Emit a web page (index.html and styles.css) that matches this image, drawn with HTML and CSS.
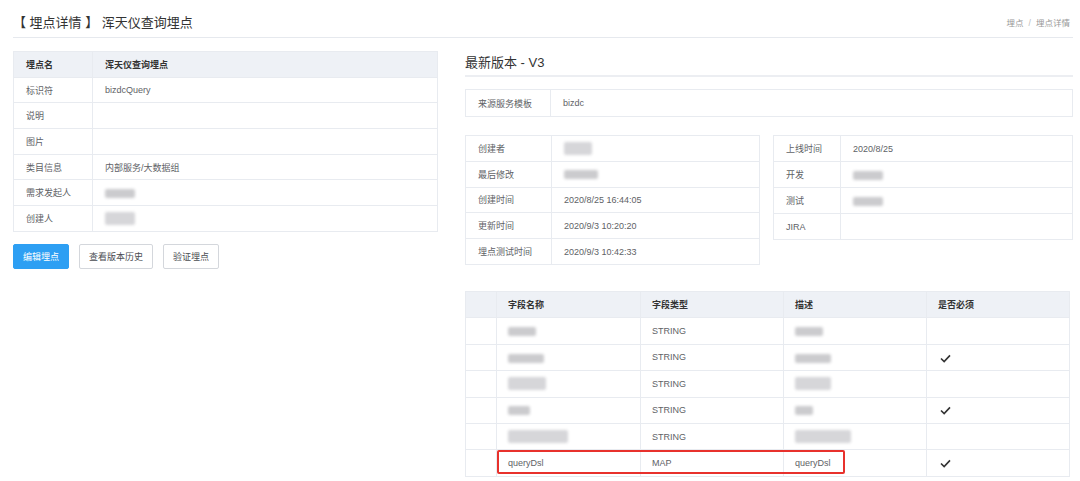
FILE: index.html
```
<!DOCTYPE html>
<html lang="zh">
<head>
    <meta charset="UTF-8">
    <title>埋点详情</title>
    <link rel="stylesheet" href="styles.css">
</head>
<body>
    <div class="page">
        <div class="page_head">
            <h1 class="page_title">【 埋点详情 】 浑天仪查询埋点</h1>
            <div class="crumb"><span>埋点</span><span class="sep">/</span><span>埋点详情</span></div>
        </div>
        <div class="page_body">
            <!-- 左侧: 埋点基本信息 -->
            <div class="left_col">
                <table class="info_table">
                    <tr class="head_row"><td class="lbl">埋点名</td><td>浑天仪查询埋点</td></tr>
                    <tr><td class="lbl">标识符</td><td>bizdcQuery</td></tr>
                    <tr><td class="lbl">说明</td><td></td></tr>
                    <tr><td class="lbl">图片</td><td></td></tr>
                    <tr><td class="lbl">类目信息</td><td>内部服务/大数据组</td></tr>
                    <tr><td class="lbl">需求发起人</td><td><span class="blur" style="width:30px"></span></td></tr>
                    <tr><td class="lbl">创建人</td><td><span class="blur tall" style="width:30px"></span></td></tr>
                </table>
                <div class="btns">
                    <button class="btn primary">编辑埋点</button>
                    <button class="btn">查看版本历史</button>
                    <button class="btn">验证埋点</button>
                </div>
            </div>
            <!-- 右侧: 版本信息 -->
            <div class="right_col">
                <h2 class="ver_title">最新版本 - V3</h2>
                <table class="info_table src_table">
                    <tr><td class="lbl">来源服务模板</td><td>bizdc</td></tr>
                </table>
                <div class="meta_wrap">
                    <table class="info_table meta_left">
                        <tr><td class="lbl">创建者</td><td><span class="blur tall" style="width:28px"></span></td></tr>
                        <tr><td class="lbl">最后修改</td><td><span class="blur" style="width:34px"></span></td></tr>
                        <tr><td class="lbl">创建时间</td><td>2020/8/25 16:44:05</td></tr>
                        <tr><td class="lbl">更新时间</td><td>2020/9/3 10:20:20</td></tr>
                        <tr><td class="lbl">埋点测试时间</td><td>2020/9/3 10:42:33</td></tr>
                    </table>
                    <table class="info_table meta_right">
                        <tr><td class="lbl">上线时间</td><td>2020/8/25</td></tr>
                        <tr><td class="lbl">开发</td><td><span class="blur" style="width:30px"></span></td></tr>
                        <tr><td class="lbl">测试</td><td><span class="blur" style="width:30px"></span></td></tr>
                        <tr><td class="lbl">JIRA</td><td></td></tr>
                    </table>
                </div>
                <div class="field_wrap">
                    <table class="field_table">
                        <tr class="head_row"><td class="c0"></td><td>字段名称</td><td>字段类型</td><td>描述</td><td>是否必须</td></tr>
                        <tr><td></td><td><span class="blur" style="width:28px"></span></td><td>STRING</td><td><span class="blur" style="width:28px"></span></td><td></td></tr>
                        <tr><td></td><td><span class="blur" style="width:36px"></span></td><td>STRING</td><td><span class="blur" style="width:36px"></span></td><td><svg class="chk" viewBox="0 0 12 10"><polyline points="1,5 4.5,8.5 11,1.5"/></svg></td></tr>
                        <tr><td></td><td><span class="blur tall" style="width:38px"></span></td><td>STRING</td><td><span class="blur tall" style="width:36px"></span></td><td></td></tr>
                        <tr><td></td><td><span class="blur" style="width:22px"></span></td><td>STRING</td><td><span class="blur" style="width:18px"></span></td><td><svg class="chk" viewBox="0 0 12 10"><polyline points="1,5 4.5,8.5 11,1.5"/></svg></td></tr>
                        <tr><td></td><td><span class="blur tall" style="width:60px"></span></td><td>STRING</td><td><span class="blur tall" style="width:56px"></span></td><td></td></tr>
                        <tr><td></td><td>queryDsl</td><td>MAP</td><td>queryDsl</td><td><svg class="chk" viewBox="0 0 12 10"><polyline points="1,5 4.5,8.5 11,1.5"/></svg></td></tr>
                    </table>
                    <div class="mark_box"></div>
                </div>
            </div>
        </div>
    </div>
</body>
</html>
```
FILE: styles.css
```
*{
    margin: 0;
    padding: 0;
    box-sizing: border-box;
}
body{
    background: #fff;
    font-family: "Liberation Sans", "Noto Sans CJK SC", sans-serif;
    color: #606266;
    font-size: 9px;
}
.page{
    padding: 0 7px 0 13px;
}
.page_head{
    display: flex;
    justify-content: space-between;
    align-items: flex-end;
    height: 38px;
    border-bottom: 1px solid #e6e9ee;
    padding-bottom: 6px;
}
.page_title{
    font-size: 13px;
    font-weight: normal;
    color: #333;
    line-height: 16px;
}
.crumb{
    font-size: 8.5px;
    color: #999;
    padding-right: 3px;
    line-height: 16px;
}
.crumb .sep{
    margin: 0 5px;
    color: #bbb;
}
.page_body{
    display: flex;
    gap: 27px;
    padding-top: 13px;
}
.left_col{
    width: 425px;
}
.right_col{
    flex: 1;
}
.info_table, .field_table{
    width: 100%;
    border-collapse: collapse;
    table-layout: fixed;
}
.info_table td, .field_table td{
    border: 1px solid #e8ebf0;
    height: 25.7px;
    padding: 0 12px;
    vertical-align: middle;
    white-space: nowrap;
}
.info_table td.lbl{
    width: 79px;
}
.head_row td{
    background: #eef1f6;
    color: #333;
    font-weight: bold;
}
.btns{
    display: flex;
    gap: 10px;
    margin-top: 12px;
}
.btn{
    height: 25px;
    padding: 0 9px;
    font-family: inherit;
    font-size: 9px;
    color: #4a4d52;
    background: #fff;
    border: 1px solid #d4d7dc;
    border-radius: 2px;
}
.btn.primary{
    background: #2d9ff3;
    border-color: #2d9ff3;
    color: #fff;
}
.ver_title{
    font-size: 13px;
    font-weight: normal;
    color: #333;
    line-height: 24px;
    border-bottom: 2px solid #eceef2;
}
.src_table{
    margin-top: 12px;
}
.src_table td{
    height: 27px;
}
.src_table td.lbl{
    width: 85px;
}
.meta_wrap{
    display: flex;
    align-items: flex-start;
    gap: 13px;
    margin-top: 18px;
}
.meta_left{
    width: 295px;
}
.meta_left td.lbl{
    width: 86px;
}
.meta_left td{
    height: 25.8px;
}
.meta_right{
    width: 300px;
}
.meta_right td{
    height: 26px;
}
.meta_right td.lbl{
    width: 67px;
}
.field_wrap{
    position: relative;
    width: 605px;
    margin-top: 26px;
}
.field_table td{
    height: 26.4px;
    padding: 0 11px;
}
.field_table td.c0{
    width: 31px;
}
.field_table td:nth-child(2){ width: 144px; }
.field_table td:nth-child(3){ width: 143px; }
.field_table td:nth-child(4){ width: 143px; }
.blur{
    display: inline-block;
    height: 9px;
    vertical-align: middle;
    background: #cbcbce;
    filter: blur(1.8px);
    border-radius: 2px;
}
.blur.tall{
    height: 13px;
    background: #d6d6d9;
}
.chk{
    width: 11px;
    height: 9px;
    margin-left: 2px;
    vertical-align: middle;
}
.chk polyline{
    fill: none;
    stroke: #333;
    stroke-width: 1.8;
}
.mark_box{
    position: absolute;
    left: 32px;
    bottom: 3px;
    width: 348px;
    height: 24px;
    border: 2px solid #e8312c;
    border-radius: 2px;
}
```
